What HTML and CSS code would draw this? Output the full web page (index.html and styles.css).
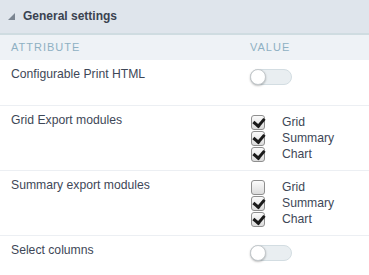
FILE: index.html
```html
<!DOCTYPE html>
<html>
<head>
<meta charset="utf-8">
<link rel="stylesheet" href="styles.css">
</head>
<body>
<div class="panel">
  <div class="panel-head">
    <svg class="caret" width="7" height="7" viewBox="0 0 7 7"><polygon points="7,0 7,7 0,7" fill="#7b8591"/></svg>
    <span class="title">General settings</span>
  </div>
  <div class="row colhead">
    <div>ATTRIBUTE</div>
    <div>VALUE</div>
  </div>
  <div class="row first">
    <div class="label">Configurable Print HTML</div>
    <div class="value"><span class="toggle"><span class="knob"></span></span></div>
  </div>
  <div class="row">
    <div class="label">Grid Export modules</div>
    <div class="value checks">
      <label class="check"><span class="box on"></span>Grid</label>
      <label class="check"><span class="box on"></span>Summary</label>
      <label class="check"><span class="box on"></span>Chart</label>
    </div>
  </div>
  <div class="row">
    <div class="label">Summary export modules</div>
    <div class="value checks">
      <label class="check"><span class="box"></span>Grid</label>
      <label class="check"><span class="box on"></span>Summary</label>
      <label class="check"><span class="box on"></span>Chart</label>
    </div>
  </div>
  <div class="row last">
    <div class="label">Select columns</div>
    <div class="value"><span class="toggle"><span class="knob"></span></span></div>
  </div>
</div>
</body>
</html>
```
FILE: styles.css
```css
html, body {
  margin: 0;
  padding: 0;
  background: #ffffff;
}
body {
  font-family: "Liberation Sans", Arial, sans-serif;
  color: #3e4757;
  width: 369px;
  height: 275px;
  overflow: hidden;
}
.panel-head {
  height: 35px;
  box-sizing: border-box;
  padding: 9px 0 0 8px;
  background: #dfe5ec;
  border-bottom: 2px solid #cfdce1;
  display: flex;
  align-items: flex-start;
}
.caret {
  margin-top: 4px;
  margin-right: 8px;
}
.title {
  font-size: 12px;
  font-weight: bold;
  line-height: 14px;
  color: #3a4250;
}
.row {
  display: grid;
  grid-template-columns: 239px 1fr;
  padding: 6px 0 8px 11px;
  border-bottom: 1px solid #eceff3;
  font-size: 12.2px;
  line-height: 16px;
}
.colhead {
  background: #eef2f6;
  border-bottom: none;
  padding: 6px 0 6px 11px;
  font-size: 11px;
  line-height: 13px;
  letter-spacing: 1px;
  color: #8eb0c3;
}
.row.first {
  min-height: 46px;
  box-sizing: border-box;
}
.row.last {
  border-bottom: none;
}
.value {
  padding-top: 2px;
}
.toggle {
  display: block;
  position: relative;
  width: 42px;
  height: 16px;
  margin-top: 1px;
  box-sizing: border-box;
  border: 1px solid #d3dde2;
  border-radius: 9px;
  background: #e9eef1;
}
.knob {
  position: absolute;
  left: -1px;
  top: -1px;
  width: 16px;
  height: 16px;
  box-sizing: border-box;
  border-radius: 50%;
  background: #ffffff;
  border: 1px solid #c4c9cc;
  box-shadow: 0 1px 2px rgba(0,0,0,0.25);
}
.checks {
  display: flex;
  flex-direction: column;
}
.check {
  display: flex;
  align-items: center;
  height: 16px;
}
.box {
  width: 14px;
  height: 15px;
  box-sizing: border-box;
  margin-left: 1px;
  margin-right: 17px;
  border: 1px solid #8f8f8f;
  border-radius: 3px;
  background: linear-gradient(#fbfbfb, #dcdcdc);
  position: relative;
}
.box.on::after {
  content: "";
  position: absolute;
  left: 3px;
  top: 0px;
  width: 5px;
  height: 8px;
  border-right: 3px solid #1a1a1a;
  border-bottom: 3px solid #1a1a1a;
  transform: rotate(40deg);
}
```
